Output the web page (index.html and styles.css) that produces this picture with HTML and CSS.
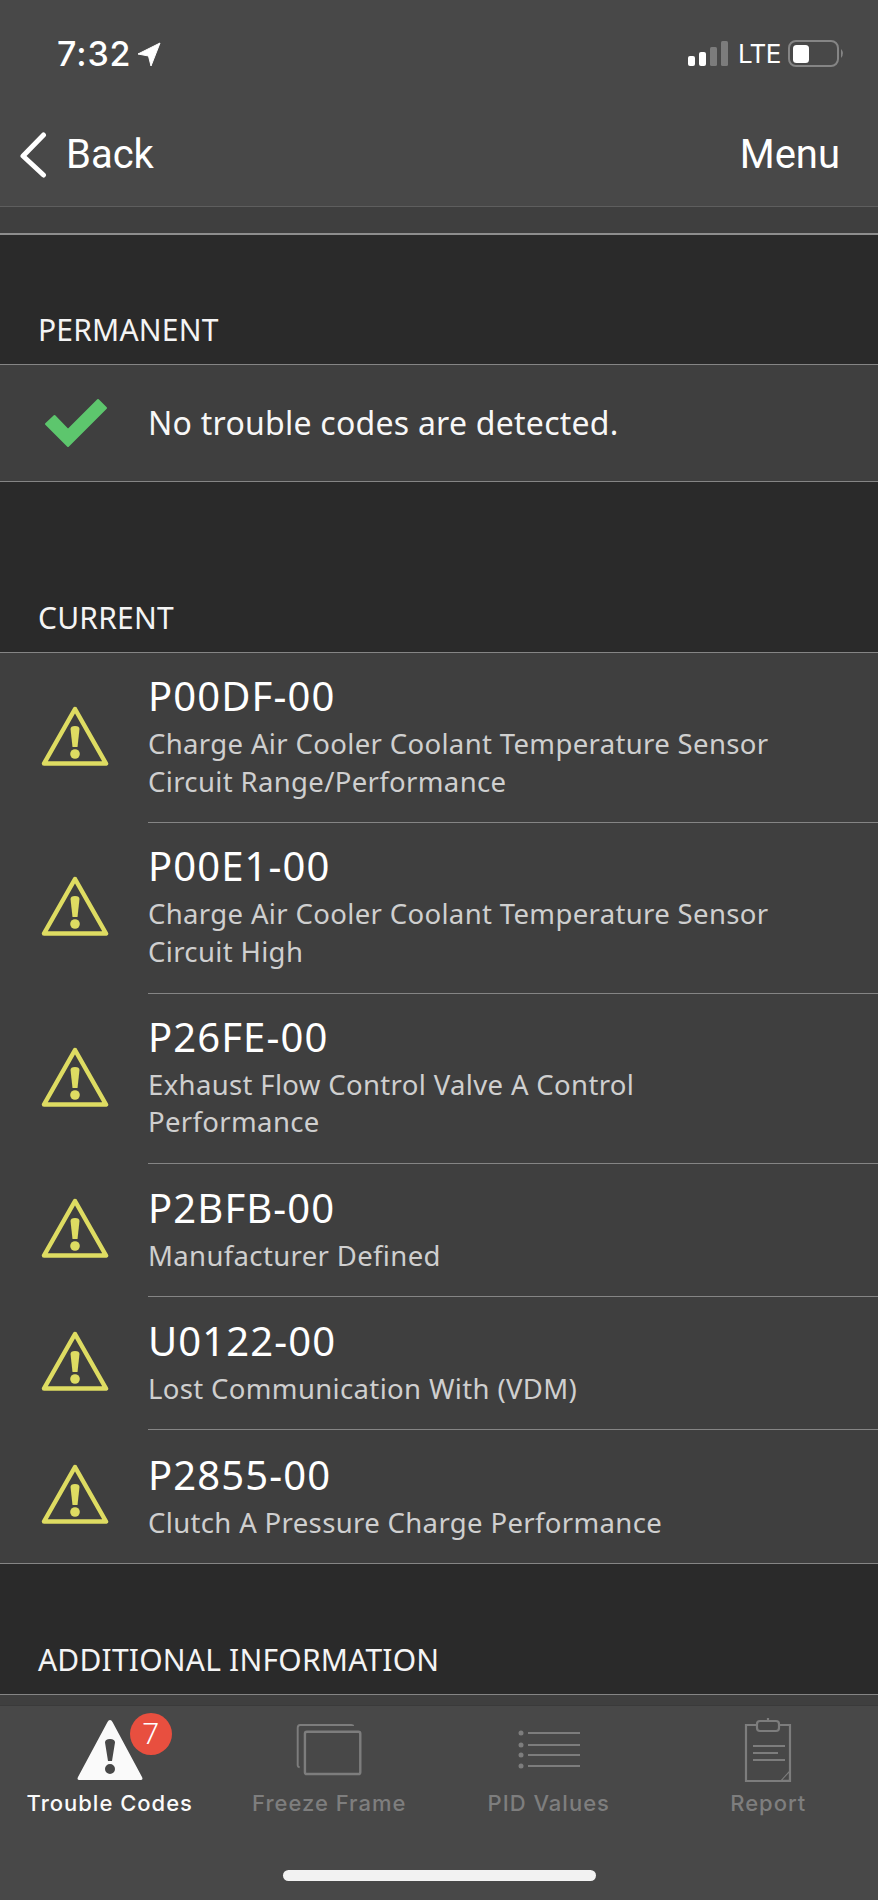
FILE: index.html
```html
<!DOCTYPE html>
<html lang="en">
<head>
<meta charset="utf-8">
<title>Trouble Codes</title>
<link rel="stylesheet" href="styles.css">
</head>
<body>
<div class="app">
  <header class="top">
    <div class="status">
      <div class="status-left">
        <span class="time">7:32</span>
        <svg class="loc" width="24" height="25" viewBox="0 0 24 25"><path d="M23 1 L14 24 L11.500 14 L1 12 Z" fill="#fff" stroke="#fff" stroke-width="1" stroke-linejoin="round"/></svg>
      </div>
      <div class="status-right">
        <svg class="signal" width="40" height="26" viewBox="0 0 40 26"><rect x="0" y="15" width="7" height="10" rx="2" fill="#fff"/><rect x="11" y="11" width="7" height="14" rx="2" fill="#fff"/><rect x="22" y="6" width="7" height="19" rx="1.500" fill="#7c7c7c"/><rect x="33" y="0" width="7" height="25" rx="1.500" fill="#7c7c7c"/></svg>
        <span class="lte">LTE</span>
        <svg class="battery" width="57" height="28" viewBox="0 0 57 28"><rect x="1" y="1" width="49" height="25" rx="7" fill="none" stroke="#858585" stroke-width="2"/><rect x="5" y="5" width="16" height="18" rx="3.500" fill="#fff"/><path d="M53 9 q4 4 0 9 z" fill="#858585"/></svg>
      </div>
    </div>
    <nav class="navbar">
      <a class="back">
        <svg width="30" height="46" viewBox="0 0 30 46"><path d="M25.500 3 L5 24 L25.500 43" fill="none" stroke="#fff" stroke-width="5" stroke-linecap="round" stroke-linejoin="round"/></svg>
        <span>Back</span>
      </a>
      <a class="menu">Menu</a>
    </nav>
  </header>

  <main class="content">
    <div class="stub"></div>

    <section class="section first">
      <h2 class="section-title">PERMANENT</h2>
      <div class="list">
        <div class="row ok-row">
          <div class="icon-cell">
            <svg width="64" height="50" viewBox="-1 -1 64 50"><polygon points="9.500,17 1,25 23,47 61,9 53,1 23,31" fill="#5dc66d" stroke="#5dc66d" stroke-width="2" stroke-linejoin="round"/></svg>
          </div>
          <div class="row-body"><p class="ok-text">No trouble codes are detected.</p></div>
        </div>
      </div>
    </section>

    <section class="section current">
      <h2 class="section-title">CURRENT</h2>
      <div class="list">
        <div class="row tall">
          <div class="icon-cell"><svg class="warn" width="68" height="62" viewBox="0 0 68 62"><use href="#warn"/></svg></div>
          <div class="row-body"><div class="code">P00DF-00</div><div class="desc">Charge Air Cooler Coolant Temperature Sensor<br>Circuit Range/Performance</div></div>
        </div>
        <div class="row tall">
          <div class="icon-cell"><svg class="warn" width="68" height="62" viewBox="0 0 68 62"><use href="#warn"/></svg></div>
          <div class="row-body"><div class="code">P00E1-00</div><div class="desc">Charge Air Cooler Coolant Temperature Sensor<br>Circuit High</div></div>
        </div>
        <div class="row tall">
          <div class="icon-cell"><svg class="warn" width="68" height="62" viewBox="0 0 68 62"><use href="#warn"/></svg></div>
          <div class="row-body"><div class="code">P26FE-00</div><div class="desc">Exhaust Flow Control Valve A Control<br>Performance</div></div>
        </div>
        <div class="row short">
          <div class="icon-cell"><svg class="warn" width="68" height="62" viewBox="0 0 68 62"><use href="#warn"/></svg></div>
          <div class="row-body"><div class="code">P2BFB-00</div><div class="desc">Manufacturer Defined</div></div>
        </div>
        <div class="row short">
          <div class="icon-cell"><svg class="warn" width="68" height="62" viewBox="0 0 68 62"><use href="#warn"/></svg></div>
          <div class="row-body"><div class="code">U0122-00</div><div class="desc">Lost Communication With (VDM)</div></div>
        </div>
        <div class="row short last">
          <div class="icon-cell"><svg class="warn" width="68" height="62" viewBox="0 0 68 62"><use href="#warn"/></svg></div>
          <div class="row-body"><div class="code">P2855-00</div><div class="desc">Clutch A Pressure Charge Performance</div></div>
        </div>
      </div>
    </section>

    <section class="section">
      <h2 class="section-title">ADDITIONAL INFORMATION</h2>
      <div class="list"><div class="row"></div></div>
    </section>
  </main>

  <footer class="tabbar">
    <div class="tabs">
      <div class="tab active">
        <div class="tab-icon">
          <svg width="68" height="62" viewBox="0 0 68 62"><path fill-rule="evenodd" fill="#fafafa" d="M34 1 Q35.500 1 36.500 3 L66 58 Q67.500 61 64.500 61 L3.500 61 Q.5 61 2 58 L31.500 3 Q32.500 1 34 1 Z M29 23.500 L32 42 L36 42 L39 23.500 Q39 20 34 20 Q29 20 29 23.500 Z M34 45 A5 5 0 1 0 34 55 A5 5 0 1 0 34 45 Z"/></svg>
          <span class="badge">7</span>
        </div>
        <span class="tab-label">Trouble Codes</span>
      </div>
      <div class="tab">
        <div class="tab-icon">
          <svg width="66" height="52" viewBox="0 0 68 54"><path d="M59 2 Q59 1 57 1 L4 1 Q1.500 1 1.500 4 L1.500 43 Q1.500 44.500 3.500 45" fill="none" stroke="#7d7d7d" stroke-width="2"/><rect x="9" y="8" width="57.500" height="44" rx="2" fill="none" stroke="#7d7d7d" stroke-width="2.500"/></svg>
        </div>
        <span class="tab-label">Freeze Frame</span>
      </div>
      <div class="tab">
        <div class="tab-icon">
          <svg width="62" height="41" viewBox="0 0 62 41"><g fill="#7d7d7d"><circle cx="3" cy="3" r="2.500"/><circle cx="3" cy="15" r="2.500"/><circle cx="3" cy="25" r="2.500"/><circle cx="3" cy="36" r="2.500"/></g><path d="M10 3 H62 M10 15 H62 M10 25 H62 M10 36 H62" stroke="#7d7d7d" stroke-width="2.200"/></svg>
        </div>
        <span class="tab-label">PID Values</span>
      </div>
      <div class="tab">
        <div class="tab-icon">
          <svg width="48" height="66" viewBox="0 0 48 66"><path d="M12 8 H2 V64 H46 V8 H36" fill="none" stroke="#7d7d7d" stroke-width="2.200"/><rect x="13" y="4" width="22" height="10" rx="3" fill="none" stroke="#7d7d7d" stroke-width="2.200"/><path d="M24 1 V4 M9 29 H41 M9 36 H34 M9 43 H41" stroke="#7d7d7d" stroke-width="2.200"/><path d="M36 64 L46 53 V64 Z" fill="#7d7d7d"/><path d="M38.500 62.800 L44.800 56 V62.800 Z" fill="#484848"/></svg>
        </div>
        <span class="tab-label">Report</span>
      </div>
    </div>
    <div class="home-indicator"></div>
  </footer>
</div>

<svg class="defs" width="0" height="0" aria-hidden="true">
  <defs>
    <g id="warn">
      <path d="M34 4 L65 58.500 H3 Z" fill="none" stroke="#dedc62" stroke-width="4.500" stroke-linejoin="round"/>
      <path d="M29.500 24 Q29.500 21 34 21 Q38.500 21 38.500 24 L36.500 42 H31.500 Z" fill="#dedc62"/>
      <circle cx="34" cy="49" r="4.800" fill="#dedc62"/>
    </g>
  </defs>
</svg>
</body>
</html>
```

FILE: styles.css
```css
* { box-sizing: border-box; }
html, body { margin: 0; padding: 0; background: #2a2a2a; }
body { font-family: "Noto Sans", "Open Sans", sans-serif; color: #fff; }

.app { width: 878px; height: 1900px; display: flex; flex-direction: column; overflow: hidden; background: #2a2a2a; }

.top { height: 207px; flex: none; background: #484848; border-bottom: 1px solid #5e5e5e; }
.status { height: 96px; padding: 33px 0 0 57px; display: flex; justify-content: space-between; align-items: flex-start; }
.status-left { display: flex; align-items: center; gap: 6px; }
.time { font-family: Inter, sans-serif; font-size: 34px; font-weight: 500; line-height: 42px; letter-spacing: .9px; }
.status-right { display: flex; align-items: center; gap: 10px; padding: 7px 33px 0 0; }
.lte { font-family: Inter, sans-serif; font-size: 26px; font-weight: 400; line-height: 28px; letter-spacing: -.5px; margin-right: -3px; }

.navbar { height: 110px; display: flex; justify-content: space-between; align-items: flex-start; padding: 35px 38px 0 18px; }
.back { display: flex; align-items: center; gap: 18px; font-family: Roboto, sans-serif; font-size: 40px; font-weight: 400; line-height: 48px; }
.menu { font-family: Roboto, sans-serif; font-size: 40px; font-weight: 400; line-height: 48px; }

.content { flex: 1; min-height: 0; overflow: hidden; }
.stub { height: 28px; background: #3f3f3f; border-bottom: 2px solid #8e8e8e; }

.section-title { height: 130px; margin: 0; padding: 0 0 14px 38px; display: flex; align-items: flex-end; font-size: 30px; font-weight: 400; line-height: 40px; letter-spacing: .2px; color: #f4f4f4; }
.section.first .section-title { height: 129px; padding-bottom: 14px; }
.section.current .section-title { height: 170px; }

.list { background: #3f3f3f; border-top: 1px solid #858585; border-bottom: 1px solid #858585; }
.row { display: flex; min-height: 116px; }
.ok-row { height: 115px; }
.tall { height: 170.300px; }
.short { height: 133px; }
.icon-cell { width: 148px; flex: none; display: flex; align-items: center; justify-content: center; padding: 0 0 4px 2px; }
.ok-row .icon-cell { padding: 0 0 0 4px; }
.row-body { flex: 1; display: flex; flex-direction: column; justify-content: center; padding-bottom: 4px; border-bottom: 1px solid #858585; }
.short .row-body { padding-bottom: 2px; }
.ok-row .row-body { padding-bottom: 0; border-bottom: 0; }
.row.last .row-body { border-bottom: 0; }
.ok-text { margin: 0; font-size: 32px; line-height: 40px; letter-spacing: .25px; color: #f7f7f7; }
.code { font-size: 40px; line-height: 54px; letter-spacing: 1.100px; color: #fff; margin-top: -2px; margin-bottom: 2px; }
.desc { font-size: 27.500px; line-height: 37.500px; color: #cfcfcf; letter-spacing: .35px; }

.tabbar { height: 195px; flex: none; background: #484848; border-top: 1px solid #3a3a3a; display: flex; flex-direction: column; align-items: center; }
.tabs { width: 100%; height: 143px; display: grid; grid-template-columns: repeat(4, 1fr); }
.tab { display: flex; flex-direction: column; align-items: center; color: #7e7e7e; }
.tab.active { color: #fafafa; }
.tab-icon { height: 76px; margin-top: 6px; display: flex; align-items: center; justify-content: center; position: relative; }
.tab-label { font-family: Inter, sans-serif; font-size: 22px; font-weight: 500; line-height: 30px; letter-spacing: 1px; }
.badge { position: absolute; left: 54px; top: 1px; width: 42px; height: 42px; border-radius: 50%; background: #e84f3f; color: #fff; font-family: Roboto, sans-serif; font-size: 30px; font-weight: 300; line-height: 42px; text-align: center; }
.home-indicator { width: 313px; height: 11px; border-radius: 6px; background: #f2f2f2; margin-top: 21px; }
.defs { position: absolute; }
```
